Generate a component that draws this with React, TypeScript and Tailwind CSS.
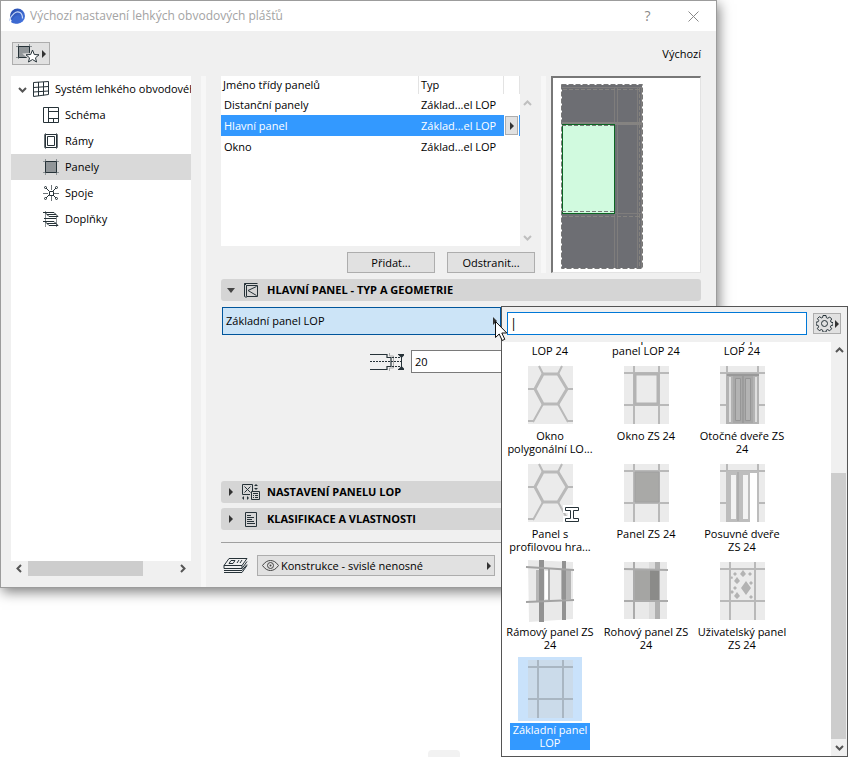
import type { ReactNode } from "react"

const ink = "#263238"

function Triangle({ dir = "right" }: { dir?: "right" | "down" }) {
  return dir === "right" ? (
    <svg width="4" height="8" viewBox="0 0 4 8" className="shrink-0"><path d="M0 0 4 4 0 8z" fill="#333" /></svg>
  ) : (
    <svg width="8" height="5" viewBox="0 0 8 5" className="shrink-0"><path d="M0 0h8L4 5z" fill="#444" /></svg>
  )
}

const chevrons = {
  up: "M1 6 4.500 2.500 8 6",
  down: "M1 3 4.500 6.500 8 3",
  left: "M6 1 2.500 4.500 6 8",
  right: "M3 1 6.500 4.500 3 8",
}

function Chevron({ dir, color = "#555" }: { dir: keyof typeof chevrons; color?: string }) {
  return (
    <svg width="9" height="9" viewBox="0 0 9 9" fill="none" stroke={color} strokeWidth="2" className="shrink-0">
      <path d={chevrons[dir]} />
    </svg>
  )
}

function Icon({ w = 16, h = 16, children }: { w?: number; h?: number; children: ReactNode }) {
  return (
    <svg width={w} height={h} viewBox={`0 0 ${w} ${h}`} fill="none" stroke={ink} className="shrink-0">
      {children}
    </svg>
  )
}

const SystemIcon = () => (
  <Icon>
    <path d="M.5 1.500 15.500.5v13l-15 2zM5.500 1v14M10.500 1v13.500M.5 6.500l15-1M.5 11l15-1" />
  </Icon>
)

const treeItems = [
  {
    label: "Schéma",
    icon: <Icon><path d="M.5.5h15v15H.5zM5.500.5v15M5.500 4.500h10M5.500 11.500h10M10.500 11.500v4" /></Icon>,
  },
  {
    label: "Rámy",
    icon: (
      <Icon>
        <path d="M2.500 0v16M13.500 0v16M1 1.500h14M1 14.500h14" stroke="#8b9194" />
        <path d="M2.500 1.500h11v13h-11zM4.500 3.500h7v9h-7z" />
        <path d="M1.500 2v12M14.500 2v12" stroke="#6d7478" />
      </Icon>
    ),
  },
  {
    label: "Panely",
    selected: true,
    icon: (
      <Icon>
        <path d="M2.500 0v16M13.500 0v16M0 2.500h16M0 13.500h16" stroke="#8b9194" />
        <path d="M2.500 2.500h11v11h-11z" fill="#919699" />
      </Icon>
    ),
  },
  {
    label: "Spoje",
    icon: (
      <Icon>
        <path d="M8.500 0v5M8.500 11v5M0 8.500h5M11 8.500h5" stroke="#6d7478" />
        <path d="M3 3l3 3M13 3l-3 3M3 13l3-3M13 13l-3-3M6.500 6.500h4v4h-4z" />
        <circle cx="2.500" cy="2.500" r="1" />
        <circle cx="13.500" cy="2.500" r="1" />
        <circle cx="2.500" cy="13.500" r="1" />
        <circle cx="13.500" cy="13.500" r="1" />
      </Icon>
    ),
  },
  {
    label: "Doplňky",
    icon: (
      <Icon>
        <path d="M2.500 0v16M13.500 5v11" stroke="#8b9194" />
        <path d="M0 1.500h11l4 4H6l-4-4M1 7.500h12M0 10.500h11l4 4H6l-4-4M4 3.500h9M4 12.500h9" />
      </Icon>
    ),
  },
]

const panelClasses = ["Distanční panely", "Hlavní panel", "Okno"]

const line = "#b9b9b9"

function Thumb({ blue = false, children }: { blue?: boolean; children: ReactNode }) {
  return (
    <svg width="45" height="58" viewBox="0 0 45 58" fill="none" className="overflow-visible">
      <rect width="45" height="58" fill={blue ? "#cbdbea" : "#ebebeb"} />
      {children}
    </svg>
  )
}

const Hexagon = () => (
  <>
    <path d="M0 23h7M39 23h6M11 0l4 8M34 0l-4 8M15 38 5 56M30 38l10 18M0 55h6M39 55h6" stroke={line} strokeWidth="2" />
    <path d="M15 8h15l9 15-9 15H15L7 23z" stroke={line} strokeWidth="3" />
  </>
)

const Lattice = ({ color = line }: { color?: string }) => (
  <path d="M10 0v58M35 0v58M0 7h45M0 39h45" stroke={color} strokeWidth="2" />
)

const objects = [
  { label: "Dveře\nLOP 24", art: <Thumb><Lattice /></Thumb> },
  { label: "Kompozitní\npanel LOP 24", art: <Thumb><Lattice /></Thumb> },
  { label: "Rámový panel\nLOP 24", art: <Thumb><Lattice /></Thumb> },
  { label: "Okno\npolygonální LO...", art: <Thumb><Hexagon /></Thumb> },
  {
    label: "Okno ZS 24",
    art: <Thumb><Lattice /><path d="M11 8h23v30H11z" stroke="#b3b3b3" strokeWidth="3" /></Thumb>,
  },
  {
    label: "Otočné dveře ZS\n24",
    art: (
      <Thumb>
        <path d="M7 0v7M38 0v7M0 7h45M0 39h45" stroke={line} strokeWidth="2" />
        <path d="M6 7h33v51H6z" fill="#b3b3b3" />
        <path d="M9 11h2v45H9zM35 11h2v45h-2z" fill="#dedede" />
        <path d="M13 9h20v48H13z" fill="#a8a8a8" />
        <path d="M15.500 12.500h5v42h-5zM25.500 12.500h5v42h-5z" fill="#b3b3b3" stroke="#969696" />
        <path d="M23 9v48" stroke="#8f8f8f" />
        <path d="M7 9h32" stroke="#999" strokeWidth="2" />
      </Thumb>
    ),
  },
  {
    label: "Panel s\nprofilovou hra...",
    art: (
      <Thumb>
        <Hexagon />
        <path d="M37 43h14v4h-5v7h5v4H37v-4h5v-7h-5z" fill="#fff" stroke="#fff" strokeWidth="4" />
        <path d="M37.500 43.500h13v3h-5v8h5v3h-13v-3h5v-8h-5z" fill="#fff" stroke={ink} />
      </Thumb>
    ),
  },
  {
    label: "Panel ZS 24",
    art: <Thumb><Lattice /><path d="M11 8h24v30H11z" fill="#a9a9a7" stroke="#a0a0a0" /></Thumb>,
  },
  {
    label: "Posuvné dveře\nZS 24",
    art: (
      <Thumb>
        <path d="M7 0v7M38 0v7M0 7h45M0 39h45" stroke={line} strokeWidth="2" />
        <path d="M6 7h33v51H6z" fill="#bdbdbd" />
        <path d="M30 9h7v49h-7z" fill="#fff" />
        <path d="M11 11h5v44h-5zM23 11h5v44h-5z" fill="#f2f2f2" />
        <path d="M18 8v49" stroke="#9d9d9d" />
      </Thumb>
    ),
  },
  {
    label: "Rámový panel ZS\n24",
    art: (
      <svg width="50" height="62" viewBox="0 0 50 62" fill="none">
        <path d="M3 0 48 2v57L4 62z" fill="#e9e9e9" />
        <path d="M11 10h8v31h-8zM36 10h10v29H36z" fill="#b5b5b5" />
        <path d="M14 0h5v62h-5zM37 1h4v59h-4z" fill="#929292" />
        <path d="M20 11h3v28h-3z" fill="#fff" />
        <path d="M24 9v31" stroke="#aaa" strokeWidth="2" />
        <path d="m1 7 48 3M1 42l48-2" stroke="#a3a3a3" strokeWidth="2" />
      </svg>
    ),
  },
  {
    label: "Rohový panel ZS\n24",
    art: (
      <svg width="45" height="58" viewBox="0 0 45 58" fill="none">
        <path d="M0 0h43v57H0z" fill="#e9e9e9" />
        <path d="M25 0h6v57h-6z" fill="#dcdcdc" />
        <path d="M31 0h5v57h-5z" fill="#b0b0b0" />
        <path d="M10 7h25v31H10z" fill="#a5a5a3" />
        <path d="M26 7h9v31h-9z" fill="#8b8b89" />
        <path d="M10 0v57M0 7l44 1M0 39h44" stroke="#ababab" strokeWidth="2" />
      </svg>
    ),
  },
  {
    label: "Uživatelský panel\nZS 24",
    art: (
      <Thumb>
        <Lattice />
        <path
          d="m26 19 5 7-5 7-5-7zM17 15l3 4-3 3-3-3zM23 8l3 4-3 3-3-3zM17 30l3 4-3 3-3-3zM15 10l2 2-2 2-2-2zM30 10l2 2-2 2-2-2zM12 14l1 2-1 1-2-1zM15 24l2 2-2 2-2-2zM31 19l2 2-2 2-2-2zM12 28l2 2-2 2-2-2zM31 33l2 2-2 2-2-2z"
          fill="#b3b3b3"
        />
      </Thumb>
    ),
  },
  { label: "Základní panel\nLOP", selected: true, art: <Thumb blue><Lattice color="#a9b6c2" /></Thumb> },
]

function SectionHeader({ icon, title, open = false }: { icon: ReactNode; title: string; open?: boolean }) {
  return (
    <button aria-expanded={open} className="flex h-[22px] w-full items-center rounded-[3px] bg-[#d5d5d5] text-left font-bold">
      <span className="flex w-[19px] justify-center"><Triangle dir={open ? "down" : "right"} /></span>
      <span className="mr-[5px] flex w-[22px] justify-center">{icon}</span>
      {title}
    </button>
  )
}

function Preview() {
  return (
    <div className="h-[197px] flex-1 border-t-2 border-l-2 border-r border-b border-t-[#777] border-l-[#777] border-r-[#e3e3e3] border-b-[#e3e3e3] bg-white">
      <svg width="100" height="194" viewBox="2 2 100 194" fill="none" className="block">
        <rect x="10" y="8" width="82" height="185" fill="#6d6e73" />
        <path d="M63.500 12v180M66.500 12v180M86.500 12v180M90.500 12v180M11 11.500h80M64 137.500h27" stroke="#7f7d7c" />
        <path d="M11 47.500h81" stroke="#858382" strokeWidth="3" />
        <path d="M12 13.500h78M12 140.500h78M88.500 12v180M11 47h81" stroke="#85837f" strokeDasharray="4 2" />
        <rect x="11.500" y="48.500" width="52" height="89" fill="#d1fadf" stroke="#0b6623" />
        <path d="M11 49.500h53M11 135.500h53" stroke="#777" strokeDasharray="4 2" />
        <rect x="10.500" y="8.500" width="81" height="184" stroke="#fff" />
        <rect x="10.500" y="8.500" width="81" height="184" stroke="#777" strokeDasharray="5 2" />
      </svg>
    </div>
  )
}

function ObjectPicker() {
  return (
    <div className="absolute -top-px left-full z-10 w-[347px] border border-[#555] bg-[#f0f0f0]">
      <div className="flex h-[35px] items-center gap-[6px] pr-[6px] pb-[2px] pl-[5px]">
        <input
          aria-label="Hledat"
          defaultValue="|"
          className="h-[23px] min-w-0 flex-1 border border-solid border-[#0078d7] bg-white px-[2px] pb-[2px] text-[13px] outline-none"
        />
        <button aria-label="Nastavení" className="flex h-[21px] w-7 items-center justify-center gap-[2px] border border-[#adadad] bg-[#e1e1e1]">
          <svg width="17" height="17" viewBox="0 0 17 17" fill="none" stroke={ink}>
            <path d="M7 .5h3l.4 2.200 1.300.6 2-1.300 2 2-1.200 1.900.5 1.300 2 .4v2.500l-2 .4-.6 1.400 1.200 1.900-2 2-1.900-1.200-1.300.5-.4 2H7l-.4-2-1.300-.6-2 1.200-1.900-2 1.200-1.900-.5-1.400-2-.4V7.200l2-.4.6-1.300L1.500 3.600l1.900-1.900 2 1.200 1.200-.4z" />
            <circle cx="8.500" cy="8.500" r="3" />
          </svg>
          <Triangle />
        </button>
      </div>
      <div className="flex h-[414px]">
        <ul className="flex flex-1 flex-wrap content-end overflow-hidden bg-white pr-[41px] pb-[1px]">
          {objects.map((item) => (
            <li key={item.label} className="flex h-[98px] w-24 flex-col items-center">
              <span className={`flex size-16 shrink-0 items-center justify-center ${item.selected ? "bg-[#c9e2fb]" : ""}`}>{item.art}</span>
              <span
                className={`mt-[2px] shrink-0 whitespace-pre text-center leading-[13px] ${item.selected ? "w-20 bg-[#3399ff] pb-px text-white" : ""}`}
              >
                {item.label}
              </span>
            </li>
          ))}
        </ul>
        <div className="flex w-4 flex-col items-center bg-[#f0f0f0]">
          <span className="flex h-[17px] items-center"><Chevron dir="up" /></span>
          <div className="mt-[114px] w-full flex-1 border-r border-[#f0f0f0] bg-[#cdcdcd]" />
          <span className="flex h-[17px] items-center"><Chevron dir="down" /></span>
        </div>
      </div>
    </div>
  )
}

export default function App() {
  return (
    <div className="flex min-h-screen flex-col items-start overflow-hidden bg-white text-[11px] leading-[14px] text-black font-['Open_Sans','Noto_Sans',sans-serif]">
      <main className="w-full max-w-[717px] border border-[#9c9c9c] bg-[#f0f0f0] shadow-[2px_4px_12px_rgba(0,0,0,0.5)]">
        <header className="flex h-[30px] items-center bg-white pl-2">
          <svg width="17" height="17" viewBox="0 0 17 17">
            <defs>
              <linearGradient id="logo" x1="0" y1="0" x2="1" y2="1">
                <stop offset="0" stopColor="#2448a8" />
                <stop offset="1" stopColor="#4a7be6" />
              </linearGradient>
            </defs>
            <circle cx="8.500" cy="8" r="7.500" fill="url(#logo)" />
            <path d="M0 13C3 6 7 2.500 11 4.500c2 1.200 2.500 3.500 2.500 6" fill="none" stroke="#c9d8f8" strokeWidth="1.200" />
            <path d="M2 14C4 9.500 6.500 7 9 7.500c2 .6 2 4 1.500 7.500C8 16 4 16 2 14z" fill="#3c69d0" />
          </svg>
          <h1 className="ml-1 flex-1 text-[12px] text-[#a3a3a3]">Výchozí nastavení lehkých obvodových plášťů</h1>
          <button aria-label="Nápověda" className="w-[45px] text-[14px] text-[#888]">?</button>
          <button aria-label="Zavřít" className="flex w-[46px] justify-center">
            <svg width="11" height="11" viewBox="0 0 11 11" stroke="#888"><path d="m.5.5 10 10M10.500.5l-10 10" /></svg>
          </button>
        </header>

        <div className="flex h-[45px] items-center justify-between pr-[15px] pl-[11px]">
          <button aria-label="Oblíbené" className="flex h-[23px] w-[38px] items-center justify-center gap-[2px] border border-[#adadad] bg-[#e1e1e1]">
            <svg width="24" height="19" viewBox="0 0 24 19" fill="none" stroke={ink}>
              <path d="M2.500 0v15M13.500 0v8M0 2.500h16M0 13.500h11" stroke="#8b9194" />
              <path d="M2.500 2.500h11v11h-11z" fill="#919699" />
              <path d="m16.500 6 1.800 4.500 4.700.3-3.500 3 1 4.200-4-2.500-4 2.500 1-4.200-3.500-3 4.700-.3z" fill="#fff" stroke="#e1e1e1" strokeWidth="3" />
              <path d="m16.500 6 1.800 4.500 4.700.3-3.500 3 1 4.200-4-2.500-4 2.500 1-4.200-3.500-3 4.700-.3z" fill="#fff" />
            </svg>
            <Triangle />
          </button>
          <span>Výchozí</span>
        </div>

        <div className="flex pr-[15px] pl-[10px]">
          {/* Component tree */}
          <nav className="flex w-[180px] shrink-0 flex-col pb-[11px]">
            <div className="flex-1 overflow-hidden bg-white">
              <a href="#system" className="flex h-[26px] items-center whitespace-nowrap pl-[7px]">
                <Chevron dir="down" />
                <span className="mr-[6px] ml-[6px]"><SystemIcon /></span>
                Systém lehkého obvodovéh
              </a>
              {treeItems.map((item) => (
                <a key={item.label} href="#tree" className={`flex h-[26px] items-center gap-[6px] pl-8 ${item.selected ? "bg-[#d9d9d9]" : ""}`}>
                  {item.icon}
                  {item.label}
                </a>
              ))}
            </div>
            <div className="flex h-[15px] items-center">
              <span className="flex w-[17px] justify-center"><Chevron dir="left" /></span>
              <div className="h-full w-[115px] bg-[#cdcdcd]" />
              <span className="ml-auto flex w-[17px] justify-center"><Chevron dir="right" /></span>
            </div>
          </nav>

          <div className="mr-[15px] ml-[10px] w-[5px] shrink-0 bg-[#f7f7f7]" />

          <div className="min-w-0 flex-1 pb-[11px]">
            <div className="flex">
              <div className="w-[314px]">
                <div className="flex h-[170px]">
                  <div className="flex-1 bg-white">
                    <table className="w-full table-fixed border-separate border-spacing-0 text-left">
                      <colgroup>
                        <col className="w-[198px]" />
                        <col className="w-[85px]" />
                        <col />
                      </colgroup>
                      <thead>
                        <tr className="h-[18px]">
                          <th className="border-r border-[#e3e3e3] p-0 pl-[2px] font-normal">Jméno třídy panelů</th>
                          <th className="border-r border-[#e3e3e3] p-0 pl-[2px] font-normal">Typ</th>
                          <th className="border-r border-[#e3e3e3] p-0" />
                        </tr>
                      </thead>
                      <tbody>
                        {panelClasses.map((name) => (
                          <tr key={name} className={`h-[21px] ${name === "Hlavní panel" ? "bg-[#3399ff] text-white" : ""}`}>
                            <td className="p-0 pl-[3px]">{name}</td>
                            <td className="p-0 pl-[2px]">Základ...el LOP</td>
                            <td className="p-0">
                              {name === "Hlavní panel" && (
                                <button aria-label="Změnit typ" className="ml-px flex h-[19px] w-[13px] items-center justify-center border border-[#adadad] bg-[#e1e1e1] outline outline-white">
                                  <Triangle />
                                </button>
                              )}
                            </td>
                          </tr>
                        ))}
                      </tbody>
                    </table>
                  </div>
                  <div className="flex w-[15px] flex-col items-center justify-between pt-[23px] pb-1">
                    <Chevron dir="up" color="#bfbfbf" />
                    <Chevron dir="down" color="#bfbfbf" />
                  </div>
                </div>
                <div className="mt-[6px] flex justify-end gap-3">
                  <button className="h-[21px] w-[88px] border border-[#adadad] bg-[#e1e1e1]">Přidat...</button>
                  <button className="h-[21px] w-[88px] border border-[#adadad] bg-[#e1e1e1]">Odstranit...</button>
                </div>
              </div>
              <div className="mr-[5px] ml-[6px] w-[5px] bg-[#f7f7f7]" />
              <Preview />
            </div>

            <div className="mt-[6px]">
              <SectionHeader
                open
                title="HLAVNÍ PANEL - TYP A GEOMETRIE"
                icon={
                  <Icon w={14} h={15}>
                    <path d="M.5.500h13M.5.500v13l2 1M.5.500l2 2" />
                    <path d="M2.500 2.500h11v11h-11zM12.500 3.500 4 7.500l8.500 5" />
                  </Icon>
                }
              />
            </div>
            <div className="relative mt-[6px] ml-px w-[279px]">
              <button aria-haspopup="listbox" aria-expanded className="flex h-7 w-full items-center justify-between border border-[#00559b] bg-[#cce4f7] px-[3px] text-left">
                Základní panel LOP
                <Triangle />
              </button>
              <ObjectPicker />
              <svg width="13" height="21" viewBox="0 0 13 21" className="absolute top-[14px] left-[273px] z-20">
                <path d="M.5.500v16l3.700-3.500 3 6.500 2.600-1.200-3-6.300h5z" fill="#fff" stroke="#111" />
              </svg>
            </div>

            <div className="mt-[15px] flex items-center pl-[149px]">
              <label htmlFor="thickness" aria-label="Tloušťka" className="mr-[7px]">
                <Icon w={34} h={18}>
                  <path d="M0 1.500h17v3h4v9h-4v3H0" strokeWidth="1.200" />
                  <path d="M19.500 0v3h4v12h-4v3" stroke="#aaa" />
                  <path d="M0 8.500h31" strokeDasharray="2 1" />
                  <path d="M22 4.500h8M22 13.500h8" strokeDasharray="2 1" />
                  <path d="M31.500 3v12M28 1.500h6M28 16.500h6" />
                  <path d="m31.500 5-3-3h6zM31.500 13l-3 3h6z" fill={ink} stroke="none" />
                </Icon>
              </label>
              <input id="thickness" defaultValue="20" className="h-[23px] w-[120px] border border-[#7a7a7a] bg-white px-[3px]" />
            </div>

            <div className="mt-[108px] flex flex-col gap-[5px]">
              <SectionHeader
                title="NASTAVENÍ PANELU LOP"
                icon={
                  <Icon w={18} h={16}>
                    <path d="M8 10.500H.5v-10h10V7M2.500 2.500l6 6M8.500 2.500l-6 6" />
                    <path d="M9.500 7.500h8v8h-8zM11 9.500h5M11 11.500h1M13 11.500h3M11 13.500h1M13 13.500h3" />
                    <path d="m14 0 2 2h-4zM14 6l2-2h-4zM0 14l2-2v4zM7 14l-2-2v4z" fill={ink} stroke="none" />
                  </Icon>
                }
              />
              <SectionHeader
                title="KLASIFIKACE A VLASTNOSTI"
                icon={<Icon w={12} h={15}><path d="M.5.500h11v14H.5zM2 3.500h4M2 5.500h7M2 7.500h5M2 9.500h7M2 11.500h8" /></Icon>}
              />
            </div>

            <hr className="mt-3 border-[#a0a0a0]" />
            <div className="mt-3 flex items-center gap-[9px] pl-[2px]">
              <Icon w={25} h={15}>
                <path d="M6 .5h18l-5 7H1zM1 10.500h18l5-7M1 12.500h18l5-6M1 14.500h18l5-7M1 7.500v3M19 7.500v3" />
                <path d="M8 2.500h4l-2 3H6zM14 5l2-3M17 5l2-3" />
              </Icon>
              <button className="flex h-[21px] w-[238px] items-center border border-[#adadad] bg-[#e1e1e1] pr-[3px] pl-1 text-left">
                <Icon w={17} h={11}>
                  <path d="M.5 5.500C3 2 5.500.5 8.500.5s5.500 1.500 8 5c-2.500 3.500-5 5-8 5s-5.500-1.500-8-5z" stroke="#444" />
                  <circle cx="8.500" cy="5.500" r="3" stroke="#444" />
                  <circle cx="8.500" cy="5.500" r="1" fill="#444" stroke="none" />
                </Icon>
                <span className="ml-[2px] flex-1">Konstrukce - svislé nenosné</span>
                <Triangle />
              </button>
            </div>
          </div>
        </div>
      </main>
      <div className="mt-auto ml-[428px] h-[7px] w-8 rounded-t bg-[#f2f2f2]" />
    </div>
  )
}
